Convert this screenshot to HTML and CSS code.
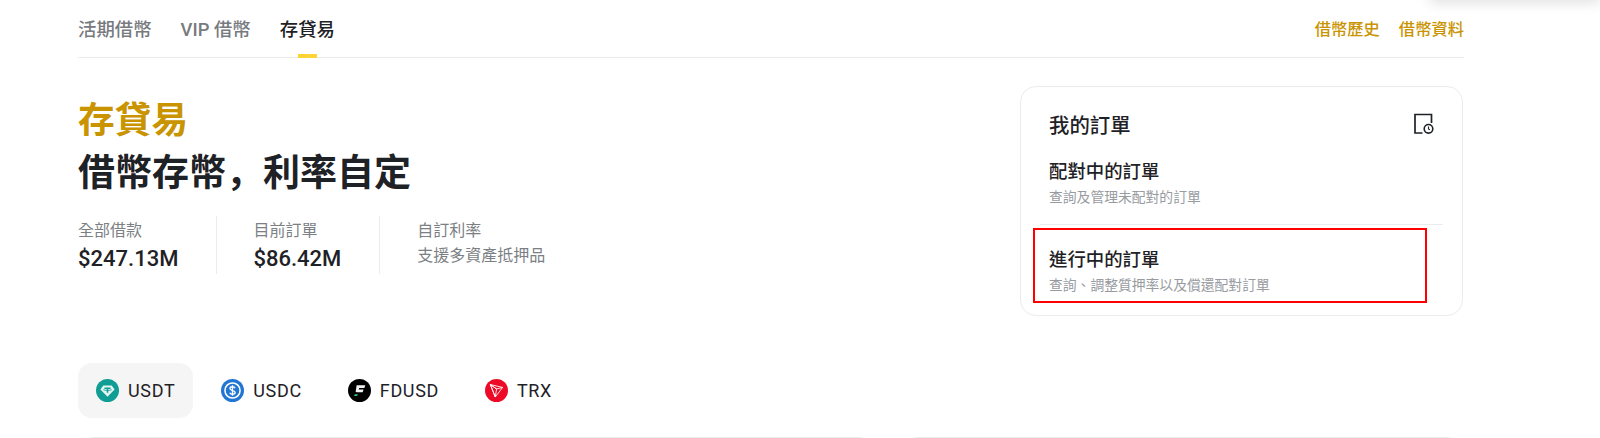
FILE: index.html
```html
<!doctype html>
<html lang="zh-Hant">
    <head>
        <meta charset="utf-8" />
        <title>存貸易</title>
        <link rel="stylesheet" href="styles.css">
    </head>

    <body>
        <div class="corner-shadow"></div>
        <div class="wrap-container">
            <nav class="tabs">
                <div class="tab-list">
                    <a class="tab">活期借幣</a>
                    <a class="tab">VIP 借幣</a>
                    <a class="tab active">存貸易</a>
                </div>
                <div class="tab-links">
                    <a>借幣歷史</a>
                    <a>借幣資料</a>
                </div>
            </nav>

            <div class="hero">
                <div class="intro">
                    <h1 class="title-gold">存貸易</h1>
                    <h2 class="title-main">借幣存幣<span class="comma" lang="zh-Hans">，</span>利率自定</h2>
                    <div class="stats">
                        <div class="stat">
                            <div class="stat-label">全部借款</div>
                            <div class="stat-value">$247.13M</div>
                        </div>
                        <div class="stat">
                            <div class="stat-label">目前訂單</div>
                            <div class="stat-value">$86.42M</div>
                        </div>
                        <div class="stat">
                            <div class="stat-label">自訂利率</div>
                            <div class="stat-text">支援多資產抵押品</div>
                        </div>
                    </div>
                </div>

                <div class="orders">
                    <div class="orders-head">
                        <span>我的訂單</span>
                        <svg width="21" height="22" viewBox="0 0 21 22" fill="none" stroke="#1e2329">
                            <path d="M9.500 20H2V1.500h16.500V10" stroke-width="1.700"/>
                            <circle cx="15.500" cy="15.800" r="4.300" stroke-width="1.600"/>
                            <path d="M15.500 13.500v2.500l1.400.9" stroke-width="1.100"/>
                        </svg>
                    </div>
                    <div class="order-item">
                        <div class="order-title">配對中的訂單</div>
                        <div class="order-sub">查詢及管理未配對的訂單</div>
                    </div>
                    <div class="order-item second">
                        <div class="order-title">進行中的訂單</div>
                        <div class="order-sub">查詢、調整質押率以及償還配對訂單</div>
                    </div>
                    <div class="red-box"></div>
                </div>
            </div>

            <div class="coins">
                <div class="coin selected">
                    <svg width="23" height="23" viewBox="0 0 24 24">
                        <circle cx="12" cy="12" r="12" fill="#0f9d94"/>
                        <path d="M7.600 6.800h8.800l3 4.200L12 18.400 4.600 11z" fill="#e6f5f3"/>
                        <path d="M8.800 8.900h6.400v1.500h-2.400v4h-1.600v-4H8.800z" fill="#0f9d94"/>
                        <path d="M7.600 11.200c2.600 1 6.200 1 8.800 0" fill="none" stroke="#0f9d94" stroke-width=".9"/>
                    </svg>
                    <span>USDT</span>
                </div>
                <div class="coin">
                    <svg width="23" height="23" viewBox="0 0 24 24">
                        <circle cx="12" cy="12" r="12" fill="#2175d3"/>
                        <circle cx="12" cy="12" r="7.900" fill="none" stroke="#fff" stroke-width="1.600"/>
                        <path d="M14.700 9.600c-.4-1-1.400-1.500-2.700-1.500-1.500 0-2.700.7-2.700 1.900 0 2.700 5.500 1.400 5.500 4 0 1.200-1.200 1.900-2.800 1.900-1.400 0-2.400-.6-2.800-1.600M12 6.600v10.800" fill="none" stroke="#fff" stroke-width="1.400"/>
                    </svg>
                    <span>USDC</span>
                </div>
                <div class="coin">
                    <svg width="23" height="23" viewBox="0 0 24 24">
                        <circle cx="12" cy="12" r="12" fill="#000"/>
                        <path d="M9 6.600h9l-.9 2.900H11.700l-.5 1.500h5l-.9 2.700H9.100L8 13.200z" fill="#f2f2f2"/>
                        <path d="M7 15.800h3.200l-.6 1.900H6.400z" fill="#25c77a"/>
                    </svg>
                    <span>FDUSD</span>
                </div>
                <div class="coin">
                    <svg width="23" height="23" viewBox="0 0 24 24">
                        <circle cx="12" cy="12" r="12" fill="#ec0a26"/>
                        <path d="M5.600 5.800l12.800 3-7.700 10zM5.600 5.800l5.100 13 1.400-8.400zM18.400 8.800l-6.300 1.600-6.500-4.600" fill="none" stroke="#fff" stroke-width=".9" stroke-linejoin="round"/>
                    </svg>
                    <span>TRX</span>
                </div>
            </div>

            <div class="bottom-cards">
                <div class="bottom-card left"></div>
                <div class="bottom-card right"></div>
            </div>
        </div>
    </body>
</html>
```

FILE: styles.css
```css
html,
body {
    margin: 0;
    padding: 0;
    height: 438px;
    overflow: hidden;
    background-color: #fff;
}
body {
    position: relative;
    font-family: "Roboto", "Noto Sans CJK TC", sans-serif;
    color: #1e2126;
}
.corner-shadow {
    position: absolute;
    top: -14px;
    right: 0;
    width: 170px;
    height: 14px;
    box-shadow: 0 2px 14px rgba(0, 0, 0, 0.14);
}
.wrap-container {
    width: 1386px;
    margin-left: 78px;
}
.tabs {
    display: flex;
    justify-content: space-between;
    height: 57px;
    border-bottom: 1px solid #eaecef;
}
.tab-list {
    display: flex;
    gap: 29px;
}
.tab {
    position: relative;
    font-size: 18.4px;
    font-weight: 500;
    line-height: 26px;
    padding-top: 17px;
    color: #777a7e;
}
.tab.active {
    color: #1e2126;
}
.tab.active::after {
    content: "";
    position: absolute;
    left: 18px;
    bottom: -1px;
    width: 19px;
    height: 4px;
    background-color: #fcd535;
}
.tab-links {
    display: flex;
    gap: 19px;
    font-size: 16.3px;
    font-weight: 500;
    line-height: 24px;
    padding-top: 18px;
    color: #c99400;
}
.hero {
    display: flex;
    justify-content: space-between;
    align-items: flex-start;
    margin-top: 28px;
}
.title-gold,
.title-main {
    margin: 0;
    font-size: 36.7px;
    font-weight: 700;
    line-height: 48px;
}
.title-gold {
    margin-top: 11px;
    color: #c99400;
}
.title-main {
    margin-top: 1px;
    font-size: 37px;
}
.comma {
    font-family: "Noto Sans CJK SC", sans-serif;
}
.stats {
    display: flex;
    margin-top: 18px;
}
.stat {
    box-sizing: border-box;
    height: 58px;
    padding-top: 3px;
    padding-right: 38px;
    margin-right: 36px;
    border-right: 1px solid #eaecef;
}
.stat:last-child {
    border-right: 0;
    margin-right: 0;
    padding-right: 0;
    padding-left: 1px;
}
.stat-label,
.stat-text {
    font-size: 16px;
    line-height: 24px;
    color: #7c7f84;
}
.stat-value {
    font-size: 22px;
    font-weight: 500;
    line-height: 30px;
    margin-top: 1px;
}
.stat-text {
    margin-top: 1px;
}
.orders {
    position: relative;
    box-sizing: border-box;
    width: 443px;
    height: 230px;
    margin-right: 1px;
    padding: 0 19px;
    border: 1px solid #eaecef;
    border-radius: 16px;
}
.orders-head {
    display: flex;
    justify-content: space-between;
    align-items: center;
    height: 28px;
    margin-top: 23px;
    padding: 0 9px;
    font-size: 20.4px;
    font-weight: 500;
}
.order-item {
    padding: 0 9px;
    height: 72px;
    box-sizing: border-box;
}
.order-item:nth-child(2) {
    margin-top: 20px;
    border-bottom: 1px solid #eaecef;
    height: 67px;
}
.order-item.second {
    padding-top: 21px;
}
.order-title {
    font-size: 18.4px;
    font-weight: 500;
    line-height: 28px;
}
.order-sub {
    font-size: 13.8px;
    line-height: 22px;
    color: #989b9f;
}
.red-box {
    position: absolute;
    left: 12px;
    top: 141px;
    width: 394px;
    height: 75px;
    box-sizing: border-box;
    border: 2px solid #ff0000;
}
.coins {
    display: flex;
    margin-top: 47px;
}
.coin {
    display: flex;
    align-items: center;
    gap: 9px;
    height: 55px;
    padding: 0 18px;
    margin-right: 10px;
    border-radius: 14px;
    font-size: 18px;
    letter-spacing: 0.65px;
}
.coin.selected {
    background-color: #f5f5f5;
}
.bottom-cards {
    display: flex;
    gap: 27px;
    height: 1px;
    overflow: hidden;
    margin-top: 19px;
}
.bottom-card {
    height: 40px;
    border: 1px solid #eaecef;
    border-radius: 16px;
    box-sizing: border-box;
}
.bottom-card.left {
    width: 797px;
}
.bottom-card.right {
    width: 561px;
}
```
